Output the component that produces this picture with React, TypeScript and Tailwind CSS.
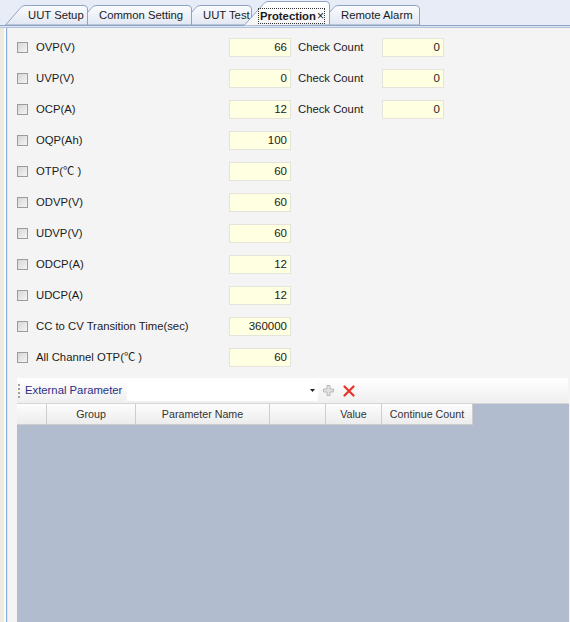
import React from "react";

const font = { fontFamily: '"Liberation Sans", Arial, "Noto Sans CJK SC", sans-serif' };

const tabs = [
  { label: "UUT Setup", w: 83 },
  { label: "Common Setting", w: 116 },
  { label: "UUT Test", w: 72 },
  { label: "Protection", w: 86, active: true },
  { label: "Remote Alarm", w: 102 },
];

const rows = [
  { label: "OVP(V)", value: "66", count: "0" },
  { label: "UVP(V)", value: "0", count: "0" },
  { label: "OCP(A)", value: "12", count: "0" },
  { label: "OQP(Ah)", value: "100" },
  { label: "OTP(℃ )", value: "60" },
  { label: "ODVP(V)", value: "60" },
  { label: "UDVP(V)", value: "60" },
  { label: "ODCP(A)", value: "12" },
  { label: "UDCP(A)", value: "12" },
  { label: "CC to CV Transition Time(sec)", value: "360000" },
  { label: "All Channel OTP(℃ )", value: "60" },
];

const columns = [
  { label: "", w: 30 },
  { label: "Group", w: 89 },
  { label: "Parameter Name", w: 134 },
  { label: "", w: 56 },
  { label: "Value", w: 56 },
  { label: "Continue Count", w: 91 },
];

function Tab({ label, w, active, z, idx }: { label: string; w: number; active?: boolean; z: number; idx: number }) {
  const h = active ? 24 : 20;
  const path = `M0.5 ${h} L${h - 5} 3.5 Q${h - 3} 0.5 ${h} 0.5 L${w - 4} 0.5 Q${w - 0.5} 0.5 ${w - 0.5} 4 L${w - 0.5} ${h}`;
  const gid = `tabgrad${idx}`;
  return (
    <div
      className={`relative shrink-0 first:ml-0 flex items-end ${active ? "-ml-[8px]" : "-ml-[12px]"}`}
      style={{ width: w, height: h, zIndex: z }}
    >
      <svg width={w} height={h + 1} className="absolute left-0 top-0">
        <defs>
          <linearGradient id={gid} x1="0" y1="0" x2="0" y2="1">
            <stop offset="0" stopColor={active ? "#ffffff" : "#fbfcfe"} />
            <stop offset="1" stopColor={active ? "#f4f4f4" : "#e1e7f3"} />
          </linearGradient>
        </defs>
        <path d={path + (active ? ` L0.5 ${h + 1}` : " Z")} fill={`url(#${gid})`} stroke="#8fa4c4" />
      </svg>
      <div className={`relative flex items-center text-[11.3px] text-[#1b1b1b] ${active ? "pl-[14px] pb-[1px] font-bold" : "pl-[23px] pb-[2px]"}`}>
        {active ? (
          <span className="border border-dotted border-[#333] pl-[1px] leading-[14px]">
            {label}
            <span className="font-normal text-[12px] ml-[1px]">×</span>
          </span>
        ) : (
          <span className="leading-[15px]">{label}</span>
        )}
      </div>
    </div>
  );
}

function Checkbox() {
  return (
    <div className="w-[11px] h-[11px] border border-[#9c9c9c] bg-gradient-to-br from-[#d6d6d6] to-[#f5f5f5] shrink-0" />
  );
}

function NumBox({ value }: { value: string }) {
  return (
    <div className="w-[62px] h-[19px] border border-[#e4e4dc] bg-[#ffffe1] text-right pr-[3px] text-[11.5px] leading-[17px] text-[#1b1b1b]">
      {value}
    </div>
  );
}

export default function App() {
  return (
    <div className="w-[570px] h-[622px] overflow-hidden bg-[#f4f4f4] flex flex-col" style={font}>
      {/* Tab strip */}
      <div className="h-[26px] bg-[#e8ecf7] border-b border-[#8fa4c4] flex items-end pl-[5px] shrink-0">
        {tabs.map((t, i) => (
          <Tab key={t.label} {...t} idx={i} z={t.active ? 20 : 10 - i} />
        ))}
      </div>
      <div className="h-[2px] bg-[#dfe6f3] border-b border-[#b3c3dc] shrink-0" />

      <div className="flex flex-1 min-h-0">
        <div className="w-[4px] bg-[#efebdc] shrink-0" />
        <div className="w-[2px] bg-[#fbfbfb] shrink-0" />
        <div className="w-[1px] bg-[#8fb0de] shrink-0" />
        <div className="w-[1px] bg-[#dbe6f5] shrink-0" />

        {/* Content */}
        <div className="flex-1 flex flex-col pl-[9px] pt-[4px] min-w-0">
          <div className="flex flex-col">
            {rows.map((r) => (
              <div key={r.label} className="h-[31px] flex items-center">
                <Checkbox />
                <span className="ml-[8px] w-[193px] text-[11.3px] text-[#1b1b1b]">{r.label}</span>
                <NumBox value={r.value} />
                {r.count !== undefined && (
                  <>
                    <span className="ml-[7px] w-[84px] text-[11.3px] text-[#1b1b1b]">Check Count</span>
                    <NumBox value={r.count} />
                  </>
                )}
              </div>
            ))}
          </div>

          {/* Toolbar */}
          <div className="mt-[5px] h-[25px] flex items-center bg-gradient-to-b from-[#ffffff] to-[#efefef] mr-[2px]">
            <div className="w-[2px] h-[14px] border-l-2 border-dotted border-[#a0a0a0] ml-[1px]" />
            <span className="ml-[5px] w-[102px] text-[11.3px] text-[#2c2f86]">External Parameter</span>
            <div className="w-[191px] h-[20px] bg-white flex items-center justify-end pr-[3px]">
              <svg width="5" height="3" viewBox="0 0 5 3">
                <path d="M0 0 H5 L2.5 3 Z" fill="#222" />
              </svg>
            </div>
            <svg width="11" height="11" viewBox="0 0 11 11" className="ml-[5px]">
              <path d="M4 0.5 H7 V4 H10.5 V7 H7 V10.5 H4 V7 H0.5 V4 H4 Z" fill="#e2e2e2" stroke="#b9b9b9" />
            </svg>
            <svg width="12" height="12" viewBox="0 0 12 12" className="ml-[9px]">
              <path d="M1.5 1.5 L10.5 10.5 M10.5 1.5 L1.5 10.5" stroke="#e8322a" strokeWidth="2.2" strokeLinecap="round" />
            </svg>
          </div>

          {/* Grid */}
          <div className="flex-1 flex flex-col bg-[#b1bdce] mr-[1px]">
            <div className="h-[22px] flex border-t border-[#d6d6d6]">
              {columns.map((c, i) => (
                <div
                  key={i}
                  className="h-full flex items-center justify-center border-r border-b border-[#cdcdcd] bg-gradient-to-b from-[#fdfdfd] to-[#ececec] text-[10.7px] text-[#333]"
                  style={{ width: c.w }}
                >
                  {c.label}
                </div>
              ))}
            </div>
          </div>
        </div>
      </div>
    </div>
  );
}
